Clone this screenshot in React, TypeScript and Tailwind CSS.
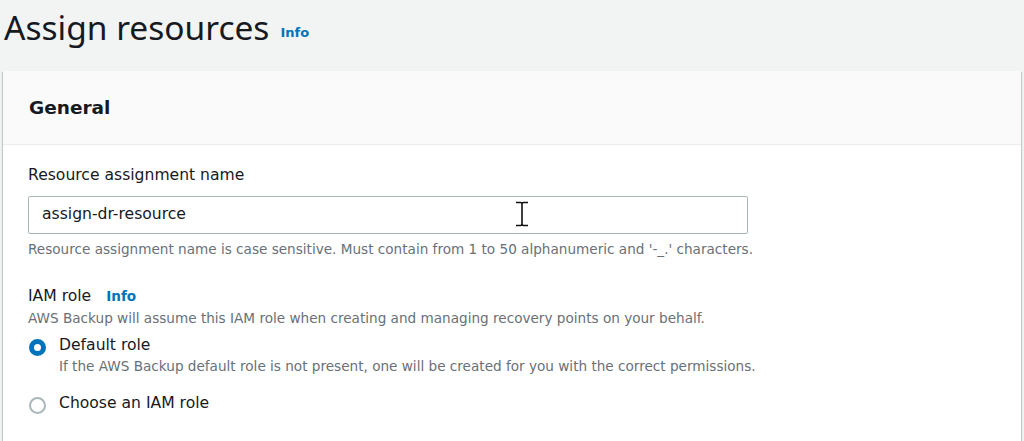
import React from "react";

export default function App() {
  const font = { fontFamily: '"DejaVu Sans", "Noto Sans", Arial, sans-serif' };
  return (
    <div className="w-[1024px] h-[441px] bg-[#f2f3f3] overflow-hidden text-[#16191f]" style={font}>
      <div className="flex items-end pl-[4px] pt-[4px] h-[71px]">
        <h1 className="text-[33.5px] leading-[44px] font-normal mb-[22px] font-['Noto_Sans',sans-serif]">Assign resources</h1>
        <span className="ml-[11px] mb-[29px] text-[13px] font-bold text-[#0073bb]">Info</span>
      </div>
      <div className="ml-[3px] w-[1018px] bg-white shadow-[0_1px_1px_0_rgba(0,28,36,0.3),1px_1px_1px_0_rgba(0,28,36,0.15),-1px_1px_1px_0_rgba(0,28,36,0.15)]">
        <div className="h-[74px] bg-[#fafafa] border-b border-[#eaeded] flex items-center pl-[26px]">
          <h2 className="text-[18.5px] font-bold leading-[22px] mt-[1px]">General</h2>
        </div>
        <div className="pl-[25px] pt-[19px]">
          <div className="text-[15.6px] leading-[22px]">Resource assignment name</div>
          <div className="mt-[10px] w-[720px] h-[38px] border border-[#aab7b8] rounded-[2px] flex items-center pl-[13px] relative">
            <span className="text-[15.6px]">assign-dr-resource</span>
            <svg className="absolute left-[486px] top-[4px]" width="14" height="26" viewBox="0 0 14 26">
              <path d="M1 1.5h4.5c1 0 1.5.5 1.5 1.5v20c0 1-.5 1.5-1.5 1.5H1M13 1.5H8.5C7.5 1.5 7 2 7 3v20c0 1 .5 1.5 1.5 1.5H13" fill="none" stroke="#111" strokeWidth="1.6" />
            </svg>
          </div>
          <div className="mt-[6px] text-[13.6px] leading-[18px] text-[#687078]">
            Resource assignment name is case sensitive. Must contain from 1 to 50 alphanumeric and '-_.' characters.
          </div>
          <div className="mt-[26px] flex items-baseline">
            <span className="text-[15.6px] leading-[24px]">IAM role</span>
            <span className="ml-[15px] text-[13.6px] font-bold text-[#0073bb]">Info</span>
          </div>
          <div className="text-[13.6px] leading-[20px] text-[#687078]">
            AWS Backup will assume this IAM role when creating and managing recovery points on your behalf.
          </div>
          <div className="mt-[6px] flex">
            <div className="mt-[5px] w-[17px] h-[17px] rounded-full border-[5px] border-[#0073bb] bg-white ml-[1px]" />
            <div className="ml-[13px]">
              <div className="text-[15.6px] leading-[22px]">Default role</div>
              <div className="text-[13.6px] leading-[20px] text-[#687078]">
                If the AWS Backup default role is not present, one will be created for you with the correct permissions.
              </div>
            </div>
          </div>
          <div className="mt-[16px] flex">
            <div className="mt-[5px] w-[17px] h-[17px] rounded-full border-2 border-[#aab7b8] bg-white ml-[1px]" />
            <div className="ml-[13px] text-[15.6px] leading-[22px]">Choose an IAM role</div>
          </div>
          <div className="h-[40px]" />
        </div>
      </div>
    </div>
  );
}
